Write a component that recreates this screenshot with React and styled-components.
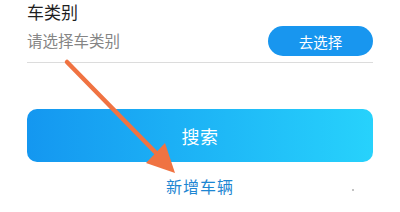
import React from "react";
import styled, { createGlobalStyle } from "styled-components";

const GlobalStyle = createGlobalStyle`
  html, body {
    margin: 0;
    padding: 0;
    background: #fff;
    font-family: "Noto Sans CJK SC", "Noto Sans", sans-serif;
  }
`;

const Page = styled.div`
  position: relative;
  width: 400px;
  height: 212px;
  overflow: hidden;
  background: #fff;
`;

const Form = styled.div`
  padding: 0 27px;
  display: flex;
  flex-direction: column;
`;

const Label = styled.div`
  font-size: 17px;
  line-height: 24px;
  color: #1f1f1f;
`;

const Row = styled.div`
  display: flex;
  align-items: center;
  justify-content: space-between;
  height: 38px;
  border-bottom: 1px solid #dcdcdc;
`;

const Placeholder = styled.span`
  font-size: 15.5px;
  color: #858585;
  margin-top: -6px;
`;

const PillButton = styled.button`
  width: 105px;
  height: 30px;
  border: none;
  border-radius: 15px;
  background: #1896ef;
  color: #fff;
  font-family: inherit;
  font-size: 14.5px;
  padding: 0;
  margin-top: -4px;
`;

const SearchButton = styled.button`
  margin-top: 46px;
  height: 53px;
  border: none;
  border-radius: 10px;
  background: linear-gradient(90deg, #1497f0 0%, #27d2fc 100%);
  color: #fff;
  font-family: inherit;
  font-size: 18px;
  letter-spacing: 0.5px;
`;

const AddLink = styled.div`
  margin-top: 12px;
  text-align: center;
  font-size: 16px;
  line-height: 24px;
  color: #1d86d2;
  letter-spacing: 1px;
`;

const Overlay = styled.svg`
  position: absolute;
  left: 0;
  top: 0;
  pointer-events: none;
`;

export default function App() {
  return (
    <Page>
      <GlobalStyle />
      <Form>
        <Label>车类别</Label>
        <Row>
          <Placeholder>请选择车类别</Placeholder>
          <PillButton>去选择</PillButton>
        </Row>
        <SearchButton>搜索</SearchButton>
        <AddLink>新增车辆</AddLink>
      </Form>
      <Overlay width="400" height="212" viewBox="0 0 400 212">
        <line x1="67" y1="62" x2="160" y2="157" stroke="#f07342" strokeWidth="4.5" strokeLinecap="round" />
        <polygon points="175,173 146,163 165,143" fill="#f07342" />
        <circle cx="353" cy="190" r="0.8" fill="#777" />
      </Overlay>
    </Page>
  );
}
